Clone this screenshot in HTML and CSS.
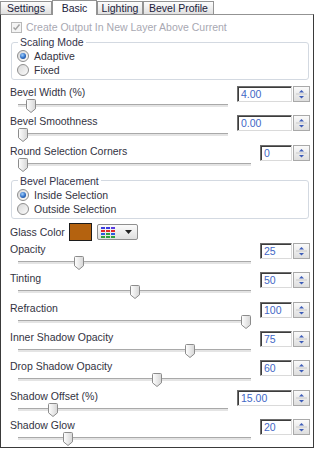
FILE: index.html
```html
<html>
<head>
<link rel="stylesheet" href="styles.css">
<title>Glass Bevel - Basic</title>
</head>
<body>
<svg class="defs" width="0" height="0">
  <defs>
    <linearGradient id="tg" x1="0" x2="1" y1="0" y2="0">
      <stop offset="0" stop-color="#ffffff"/>
      <stop offset="1" stop-color="#d6d6d6"/>
    </linearGradient>
    <symbol id="thumb" viewBox="0 0 10 14">
      <path d="M1.5 0.5h7a1 1 0 0 1 1 1v8.3l-4.5 3.7l-4.5-3.7v-8.3a1 1 0 0 1 1-1z" fill="url(#tg)" stroke="#8c8c8c"/>
    </symbol>
    <symbol id="updown" viewBox="0 0 15 14">
      <path d="M5 5.5h5l-2.5-2.5z" fill="#3d5cb8"/>
      <path d="M2 7h11" stroke="#c9c9c9"/>
      <path d="M5 9h5l-2.5 2.5z" fill="#3d5cb8"/>
    </symbol>
  </defs>
</svg>
<div class="win">
  <div class="tabs">
    <div class="tab t-settings">Settings</div>
    <div class="tab t-basic active">Basic</div>
    <div class="tab t-light">Lighting</div>
    <div class="tab t-profile">Bevel Profile</div>
  </div>
  <div class="panel">
    <div class="check-row">
      <span class="checkbox"><svg width="9" height="9" viewBox="0 0 9 9"><path d="M1.5 4.5l2 2l4-5" fill="none" stroke="#a3a3a3" stroke-width="1.5"/></svg></span>
      <span>Create Output In New Layer Above Current</span>
    </div>

    <fieldset class="group">
      <legend>Scaling Mode</legend>
      <div class="opt"><span class="radio on"></span>Adaptive</div>
      <div class="opt"><span class="radio"></span>Fixed</div>
    </fieldset>

    <div class="row first">
      <div class="main">
        <div class="label">Bevel Width (%)</div>
        <div class="slider"><div class="track"></div><svg class="thumb" style="left:calc((100% - 10px) * 0.04)"><use href="#thumb"/></svg></div>
      </div>
      <div class="spin"><div class="box">4.00</div><svg class="arrows"><use href="#updown"/></svg></div>
    </div>
    <div class="row">
      <div class="main">
        <div class="label">Bevel Smoothness</div>
        <div class="slider"><div class="track"></div><svg class="thumb" style="left:0"><use href="#thumb"/></svg></div>
      </div>
      <div class="spin"><div class="box">0.00</div><svg class="arrows"><use href="#updown"/></svg></div>
    </div>
    <div class="row">
      <div class="main">
        <div class="label">Round Selection Corners</div>
        <div class="slider"><div class="track"></div><svg class="thumb" style="left:0"><use href="#thumb"/></svg></div>
      </div>
      <div class="spin narrow"><div class="box">0</div><svg class="arrows"><use href="#updown"/></svg></div>
    </div>

    <fieldset class="group">
      <legend>Bevel Placement</legend>
      <div class="opt"><span class="radio on"></span>Inside Selection</div>
      <div class="opt"><span class="radio"></span>Outside Selection</div>
    </fieldset>

    <div class="glass">
      <div class="label">Glass Color</div>
      <div class="swatch"></div>
      <div class="pal">
        <svg width="14" height="11" viewBox="0 0 14 11">
          <rect x="0" y="0" width="4" height="2" fill="#3b3be0"/><rect x="5" y="0" width="4" height="2" fill="#3b3be0"/><rect x="10" y="0" width="4" height="2" fill="#5a3be0"/>
          <rect x="0" y="3" width="4" height="2" fill="#e02a2a"/><rect x="5" y="3" width="4" height="2" fill="#e02a2a"/><rect x="10" y="3" width="4" height="2" fill="#e02a2a"/>
          <rect x="0" y="6" width="4" height="2" fill="#2f5ae0"/><rect x="5" y="6" width="4" height="2" fill="#2fa040"/><rect x="10" y="6" width="4" height="2" fill="#2f5ae0"/>
          <rect x="0" y="9" width="4" height="2" fill="#2fa040"/><rect x="5" y="9" width="4" height="2" fill="#2fa040"/><rect x="10" y="9" width="4" height="2" fill="#2fa040"/>
        </svg>
        <svg class="drop" width="7" height="4" viewBox="0 0 7 4"><path d="M0 0h7l-3.5 4z" fill="#222"/></svg>
      </div>
    </div>

    <div class="row">
      <div class="main">
        <div class="label">Opacity</div>
        <div class="slider"><div class="track"></div><svg class="thumb" style="left:calc((100% - 10px) * 0.25)"><use href="#thumb"/></svg></div>
      </div>
      <div class="spin narrow"><div class="box">25</div><svg class="arrows"><use href="#updown"/></svg></div>
    </div>
    <div class="row">
      <div class="main">
        <div class="label">Tinting</div>
        <div class="slider"><div class="track"></div><svg class="thumb" style="left:calc((100% - 10px) * 0.5)"><use href="#thumb"/></svg></div>
      </div>
      <div class="spin narrow"><div class="box">50</div><svg class="arrows"><use href="#updown"/></svg></div>
    </div>
    <div class="row">
      <div class="main">
        <div class="label">Refraction</div>
        <div class="slider"><div class="track"></div><svg class="thumb" style="left:calc((100% - 10px) * 1)"><use href="#thumb"/></svg></div>
      </div>
      <div class="spin narrow"><div class="box">100</div><svg class="arrows"><use href="#updown"/></svg></div>
    </div>
    <div class="row">
      <div class="main">
        <div class="label">Inner Shadow Opacity</div>
        <div class="slider"><div class="track"></div><svg class="thumb" style="left:calc((100% - 10px) * 0.75)"><use href="#thumb"/></svg></div>
      </div>
      <div class="spin narrow"><div class="box">75</div><svg class="arrows"><use href="#updown"/></svg></div>
    </div>
    <div class="row">
      <div class="main">
        <div class="label">Drop Shadow Opacity</div>
        <div class="slider"><div class="track"></div><svg class="thumb" style="left:calc((100% - 10px) * 0.6)"><use href="#thumb"/></svg></div>
      </div>
      <div class="spin narrow"><div class="box">60</div><svg class="arrows"><use href="#updown"/></svg></div>
    </div>
    <div class="row">
      <div class="main">
        <div class="label">Shadow Offset (%)</div>
        <div class="slider"><div class="track"></div><svg class="thumb" style="left:calc((100% - 10px) * 0.15)"><use href="#thumb"/></svg></div>
      </div>
      <div class="spin"><div class="box">15.00</div><svg class="arrows"><use href="#updown"/></svg></div>
    </div>
    <div class="row">
      <div class="main">
        <div class="label">Shadow Glow</div>
        <div class="slider"><div class="track"></div><svg class="thumb" style="left:calc((100% - 10px) * 0.2)"><use href="#thumb"/></svg></div>
      </div>
      <div class="spin narrow"><div class="box">20</div><svg class="arrows"><use href="#updown"/></svg></div>
    </div>
  </div>
</div>
</body>
</html>
```

FILE: styles.css
```css
html, body {
    margin: 0;
    padding: 0;
    background: #ffffff;
}

body {
    font-family: "Liberation Sans", Arial, sans-serif;
    font-size: 10.5px;
    color: #33333f;
}

.defs {
    display: block;
    width: 0;
    height: 0;
    overflow: hidden;
}

.win {
    width: 314px;
    height: 450px;
}

/* tab strip */
.tabs {
    display: flex;
    align-items: flex-end;
    height: 14px;
    position: relative;
    z-index: 1;
}

.tab {
    box-sizing: border-box;
    height: 13px;
    line-height: 12px;
    border: 1px solid #939393;
    border-bottom: none;
    background: linear-gradient(#fdfdfd, #e0e0e0);
    text-align: center;
    color: #20203a;
    white-space: nowrap;
}

.tab.active {
    height: 15px;
    line-height: 14px;
    margin-bottom: -1px;
    background: #ffffff;
}

.t-settings { width: 52px; }
.t-basic { width: 45px; }
.t-light { width: 46px; }
.t-profile { width: 71px; }

/* page */
.panel {
    box-sizing: border-box;
    height: 434px;
    border: 1px solid #3a3a3a;
    border-top-color: #939393;
    padding: 0 3px 0 9px;
}

.check-row {
    display: flex;
    align-items: center;
    height: 14px;
    margin: 5px 0 0 1px;
    color: #a8a8b2;
    white-space: nowrap;
}

.checkbox {
    box-sizing: border-box;
    width: 11px;
    height: 11px;
    border: 1px solid #b8b8b8;
    background: #f4f4f4;
    margin-right: 4px;
    display: flex;
    align-items: center;
    justify-content: center;
}

.group {
    margin: 1px 1px 0 1px;
    padding: 0 0 2px 5px;
    border: 1px solid #d3d9e1;
    border-radius: 3px;
    min-width: 0;
}

.group legend {
    padding: 0 2px;
    margin-left: 1px;
    line-height: 14px;
    color: #33334a;
}

.opt {
    display: flex;
    align-items: center;
    height: 14px;
}

.radio {
    box-sizing: border-box;
    width: 12px;
    height: 12px;
    border: 1px solid #8e8e8e;
    border-radius: 50%;
    background: linear-gradient(135deg, #d8d8d8, #fbfbfb);
    margin-right: 5px;
    display: flex;
    align-items: center;
    justify-content: center;
}

.radio.on::after {
    content: "";
    width: 6px;
    height: 6px;
    border-radius: 50%;
    background: radial-gradient(circle at 40% 35%, #9fd0ff 0, #2d6cc4 55%, #173a72 100%);
}

/* slider rows */
.row {
    display: flex;
    height: 29.33px;
}

.row.first {
    margin-top: 5px;
}

.main {
    flex: 1;
    min-width: 0;
}

.label {
    height: 14px;
    line-height: 14px;
    white-space: nowrap;
}

.slider {
    position: relative;
    height: 15px;
    margin-left: 8px;
}

.track {
    position: absolute;
    left: 0;
    right: 0;
    top: 5px;
    height: 3px;
    box-sizing: border-box;
    border-top: 1px solid #a9a9a9;
    background: #e4e4e4;
}

.thumb {
    position: absolute;
    top: 0;
    width: 10px;
    height: 14px;
}

.spin {
    display: flex;
    gap: 1px;
    margin: 1px 0 0 9px;
    height: 16px;
}

.box {
    box-sizing: border-box;
    width: 55px;
    height: 16px;
    border: 1px solid #dadada;
    border-top-color: #6e6e6e;
    border-left-color: #6e6e6e;
    box-shadow: inset 1px 1px 0 #3c3c3c;
    padding: 0 0 0 3px;
    line-height: 14px;
    color: #4268c6;
    background: #ffffff;
}

.spin.narrow .box {
    width: 32px;
}

.arrows {
    box-sizing: border-box;
    width: 17px;
    height: 16px;
    border: 1px solid #a9a9a9;
    background: linear-gradient(#fafafa, #dedede);
}

/* colour row */
.glass {
    display: flex;
    align-items: center;
    height: 19px;
    margin-top: 4px;
}

.glass .label {
    width: 59px;
}

.swatch {
    box-sizing: border-box;
    width: 23px;
    height: 18px;
    border: 1px solid #1c1c1c;
    background: #b4620f;
    margin-right: 5px;
}

.pal {
    box-sizing: border-box;
    width: 41px;
    height: 16px;
    border: 1px solid #8f8f8f;
    border-radius: 2px;
    background: linear-gradient(#fbfbfb, #dfdfdf);
    display: flex;
    align-items: center;
    padding-left: 3px;
}

.pal .drop {
    margin-left: 10px;
}
```
